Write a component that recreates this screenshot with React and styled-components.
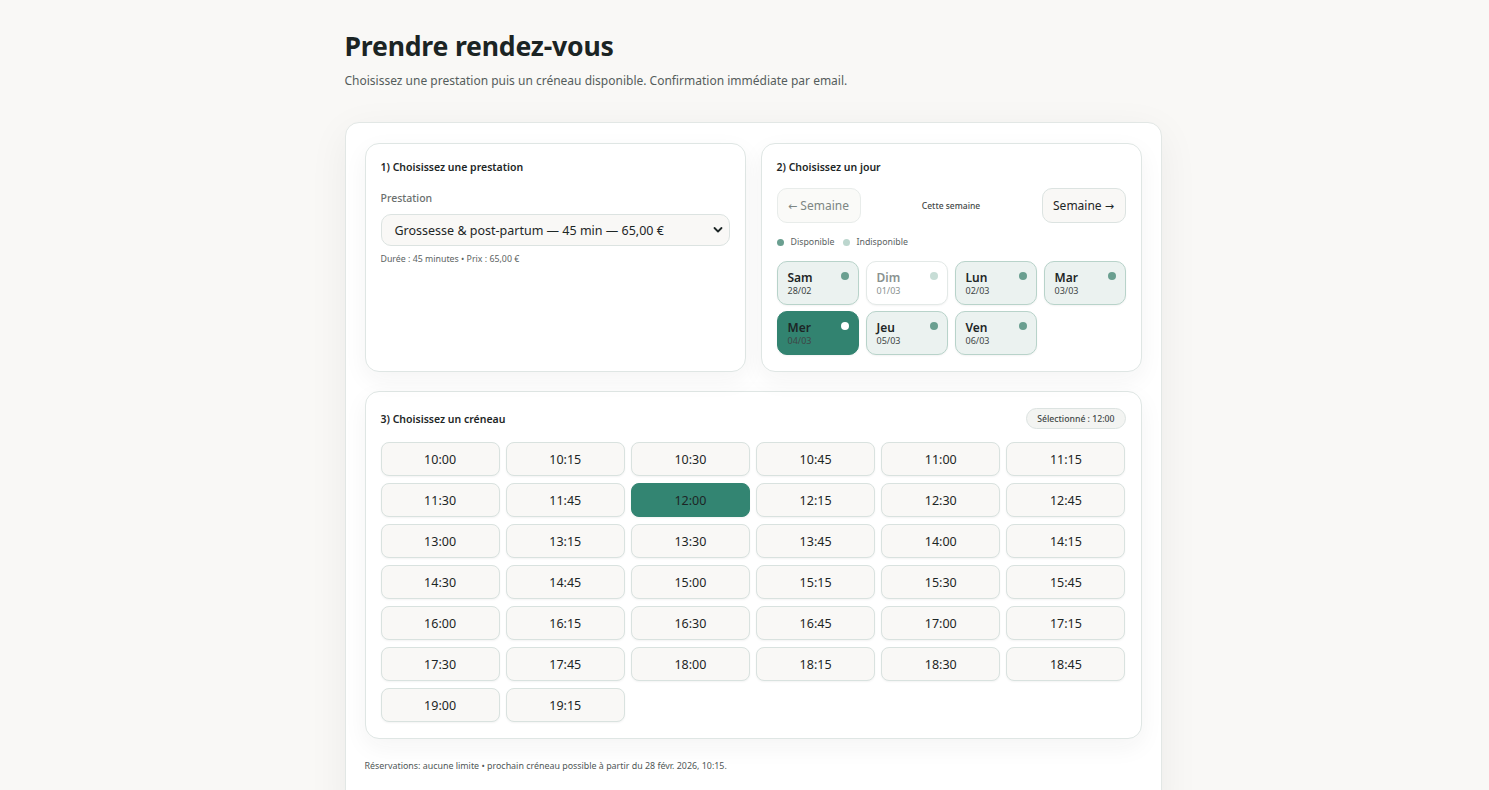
import styled, { createGlobalStyle, css } from "styled-components";

const GlobalStyle = createGlobalStyle`
  html, body {
    margin: 0;
    padding: 0;
    background: #f9f8f6;
    font-family: "Noto Sans", "Open Sans", Arial, sans-serif;
    color: #1d2626;
  }
  * { box-sizing: border-box; }
`;

const Page = styled.div`
  width: 817px;
  margin-left: calc(50% - 400px);
  padding-top: 28px;
`;

const Title = styled.h1`
  margin: 0;
  font-size: 26.6px;
  font-weight: 700;
  letter-spacing: -0.2px;
  line-height: 36px;
  color: #1b2424;
`;

const Lead = styled.p`
  margin: 8px 0 0;
  font-size: 12px;
  line-height: 17px;
  color: #555d5c;
`;

const Card = styled.div`
  margin-top: 33px;
  background: #fff;
  border: 1px solid #e2e7e5;
  border-radius: 14px;
  box-shadow: 0 10px 40px rgba(30, 40, 40, 0.06);
  padding: 20px 19px 20px;
  min-height: 700px;
`;

const TopRow = styled.div`
  display: grid;
  grid-template-columns: 1fr 1fr;
  gap: 15px;
`;

const Panel = styled.section`
  background: #fff;
  border: 1px solid #dfe6e4;
  border-radius: 14px;
  box-shadow: 0 8px 24px rgba(30, 40, 40, 0.05);
  padding: 16px 15px 16px;
  min-height: ${(p) => p.$min || "auto"};
`;

const PanelHead = styled.div`
  display: flex;
  align-items: center;
  justify-content: space-between;
  min-height: ${(p) => (p.$tall ? "21px" : "14px")};
`;

const PanelTitle = styled.h2`
  margin: 0;
  font-size: 10.5px;
  line-height: 14px;
  font-weight: 600;
  color: #1d2626;
`;

const Label = styled.div`
  margin-top: 17px;
  font-size: 10.5px;
  line-height: 14px;
  font-weight: 500;
  color: #6a6f6e;
`;

const SelectBox = styled.div`
  position: relative;
  margin-top: 9px;
  height: 32px;
  border: 1px solid #dce3e1;
  border-radius: 10px;
  background: #f9f8f6;
  display: flex;
  align-items: center;
  padding: 0 13px;
  font-size: 12.5px;
  color: #1d2626;
`;

const Chevron = styled.svg`
  position: absolute;
  right: 6px;
  top: 11px;
`;

const Hint = styled.div`
  margin-top: 8px;
  font-size: 8.8px;
  line-height: 11px;
  color: #5c6362;
`;

const NavRow = styled.div`
  margin-top: 14px;
  display: flex;
  align-items: center;
  justify-content: space-between;
`;

const NavButton = styled.button`
  height: 35px;
  width: 84px;
  border-radius: 10px;
  border: 1px solid ${(p) => (p.$disabled ? "#e8ecea" : "#dce3e1")};
  background: ${(p) => (p.$disabled ? "#fafaf8" : "#f9f8f6")};
  color: ${(p) => (p.$disabled ? "#7d8684" : "#1d2626")};
  font-family: inherit;
  font-size: 12px;
  padding: 0;
`;

const Arrow = styled.span`
  font-family: "DejaVu Sans", sans-serif;
  font-size: 11px;
`;

const WeekLabel = styled.div`
  font-size: 8.5px;
  font-weight: 500;
  color: #3f4746;
`;

const Legend = styled.div`
  margin-top: 13px;
  display: flex;
  align-items: center;
  gap: 8px;
  height: 12px;
  font-size: 8.8px;
  color: #5a6261;
`;

const LegendItem = styled.span`
  display: inline-flex;
  align-items: center;
  gap: 7px;
`;

const Dot = styled.span`
  display: inline-block;
  width: ${(p) => p.$size || 7}px;
  height: ${(p) => p.$size || 7}px;
  border-radius: 50%;
  background: ${(p) => p.$color};
`;

const DayGrid = styled.div`
  margin-top: 13px;
  display: grid;
  grid-template-columns: repeat(4, 82px);
  justify-content: space-between;
  row-gap: 6px;
`;

const Day = styled.div`
  position: relative;
  height: 44px;
  border-radius: 10px;
  padding: 8px 10px;
  border: 1px solid #b8d3ca;
  background: #ebf2f0;
  color: #1d2626;
  box-shadow: 0 1px 2px rgba(0, 0, 0, 0.05);
  ${(p) =>
    p.$off &&
    css`
      background: #fff;
      border-color: #e3e9e7;
      color: #8a9290;
    `}
  ${(p) =>
    p.$active &&
    css`
      background: #328370;
      border-color: #328370;
      color: #1d2626;
    `}
`;

const DayName = styled.div`
  font-size: 12px;
  font-weight: 600;
  line-height: 15px;
`;

const DayDate = styled.div`
  font-size: 9px;
  line-height: 11px;
  color: ${(p) => (p.$off ? "#8a9290" : "#3e4645")};
`;

const DayDot = styled(Dot)`
  position: absolute;
  top: 10px;
  right: 9px;
`;

const SlotPanel = styled(Panel)`
  margin-top: 19px;
  padding-bottom: 16px;
`;

const Badge = styled.span`
  height: 21px;
  padding: 0 10px;
  border-radius: 11px;
  border: 1px solid #dce3e1;
  background: #f3f4f2;
  font-size: 8.7px;
  font-weight: 500;
  color: #3f4746;
  display: inline-flex;
  align-items: center;
`;

const SlotGrid = styled.div`
  margin-top: 13px;
  display: grid;
  grid-template-columns: repeat(6, 1fr);
  column-gap: 6px;
  row-gap: 7px;
`;

const Slot = styled.button`
  height: 34px;
  border-radius: 8px;
  border: 1px solid ${(p) => (p.$active ? "#338572" : "#d9e2df")};
  background: ${(p) => (p.$active ? "#338572" : "#f9f8f6")};
  box-shadow: 0 1px 2px rgba(0, 0, 0, 0.05);
  font-family: inherit;
  font-size: 12.5px;
  color: #1d2626;
  padding: 0;
`;

const Footer = styled.p`
  margin: 21px 0 0;
  font-size: 8.9px;
  line-height: 12px;
  color: #4f5756;
`;

const days = [
  { name: "Sam", date: "28/02" },
  { name: "Dim", date: "01/03", off: true },
  { name: "Lun", date: "02/03" },
  { name: "Mar", date: "03/03" },
  { name: "Mer", date: "04/03", active: true },
  { name: "Jeu", date: "05/03" },
  { name: "Ven", date: "06/03" },
];

const slots = [];
for (let h = 10; h <= 19; h++) {
  for (const m of ["00", "15", "30", "45"]) {
    if (h === 19 && (m === "30" || m === "45")) continue;
    slots.push(`${h}:${m}`);
  }
}

const App = () => {
  return (
    <>
      <GlobalStyle />
      <Page>
        <Title>Prendre rendez-vous</Title>
        <Lead>Choisissez une prestation puis un créneau disponible. Confirmation immédiate par email.</Lead>
        <Card>
          <TopRow>
            <Panel $min="228px">
              <PanelHead>
                <PanelTitle>1) Choisissez une prestation</PanelTitle>
              </PanelHead>
              <Label>Prestation</Label>
              <SelectBox>
                Grossesse &amp; post-partum — 45 min — 65,00 €
                <Chevron width="10" height="8" viewBox="0 0 10 8">
                  <path d="M1.5 2l3.5 3.5L8.5 2" fill="none" stroke="#1d2626" strokeWidth="1.8" strokeLinecap="round" strokeLinejoin="round" />
                </Chevron>
              </SelectBox>
              <Hint>Durée : 45 minutes • Prix : 65,00 €</Hint>
            </Panel>
            <Panel $min="228px">
              <PanelHead>
                <PanelTitle>2) Choisissez un jour</PanelTitle>
              </PanelHead>
              <NavRow>
                <NavButton $disabled>
                  <Arrow>←</Arrow> Semaine
                </NavButton>
                <WeekLabel>Cette semaine</WeekLabel>
                <NavButton>
                  Semaine <Arrow>→</Arrow>
                </NavButton>
              </NavRow>
              <Legend>
                <LegendItem>
                  <Dot $color="#6a9f90" />
                  Disponible
                </LegendItem>
                <LegendItem>
                  <Dot $color="#bcd6ce" />
                  Indisponible
                </LegendItem>
              </Legend>
              <DayGrid>
                {days.map((d) => (
                  <Day key={d.name} $off={d.off} $active={d.active}>
                    <DayName>{d.name}</DayName>
                    <DayDate $off={d.off}>{d.date}</DayDate>
                    <DayDot
                      $size={8}
                      $color={d.active ? "#ffffff" : d.off ? "#c7ddd6" : "#6a9f90"}
                    />
                  </Day>
                ))}
              </DayGrid>
            </Panel>
          </TopRow>
          <SlotPanel>
            <PanelHead $tall>
              <PanelTitle>3) Choisissez un créneau</PanelTitle>
              <Badge>Sélectionné : 12:00</Badge>
            </PanelHead>
            <SlotGrid>
              {slots.map((s) => (
                <Slot key={s} $active={s === "12:00"}>
                  {s}
                </Slot>
              ))}
            </SlotGrid>
          </SlotPanel>
          <Footer>
            Réservations: aucune limite • prochain créneau possible à partir du 28 févr. 2026, 10:15.
          </Footer>
        </Card>
      </Page>
    </>
  );
};

export default App;
